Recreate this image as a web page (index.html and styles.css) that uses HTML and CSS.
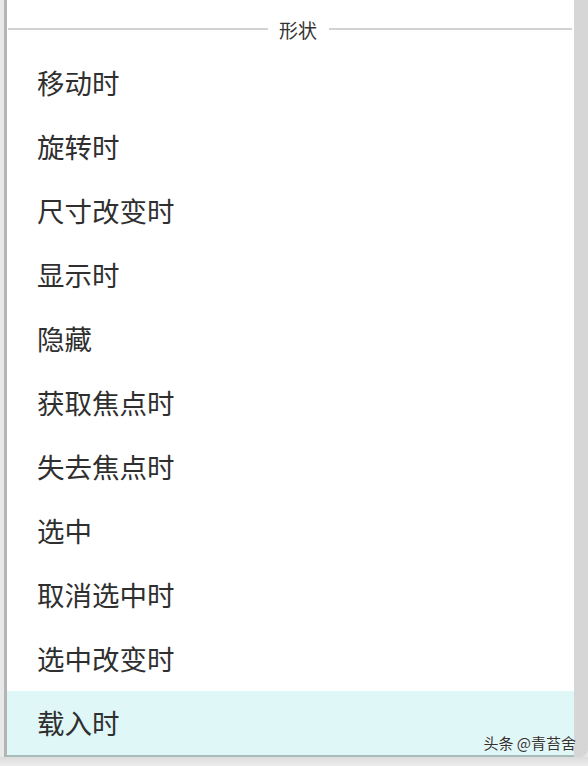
FILE: index.html
```html
<!DOCTYPE html>
<html lang="zh-CN">
<head>
    <meta charset="UTF-8">
    <meta name="viewport" content="width=device-width, initial-scale=1.0">
    <title>形状事件</title>
    <link rel="stylesheet" href="styles.css">
</head>
<body>
    <div class="window">
        <!-- left frame edge -->
        <div class="side"></div>

        <div class="panel">
            <!-- Section title with rules on both sides -->
            <div class="section-title">
                <span class="rule rule-left"></span>
                <span class="label">形状</span>
                <span class="rule rule-right"></span>
            </div>

            <ul class="event-list">
                <li>移动时</li>
                <li>旋转时</li>
                <li>尺寸改变时</li>
                <li>显示时</li>
                <li>隐藏</li>
                <li>获取焦点时</li>
                <li>失去焦点时</li>
                <li>选中</li>
                <li>取消选中时</li>
                <li>选中改变时</li>
                <li class="active">载入时</li>
            </ul>
        </div>

        <!-- scrollbar thumb -->
        <div class="scroll"></div>
    </div>

    <div class="footer"></div>

    <span class="watermark">头条 @青苔舍</span>
</body>
</html>
```

FILE: styles.css
```css
body {
    margin: 0;
    padding: 0;
    width: 588px;
    height: 766px;
    overflow: hidden;
    position: relative;
    background-color: #e6e6e6;
    font-family: "Noto Sans CJK SC", "Noto Sans", sans-serif;
    color: #333;
}

.window {
    display: flex;
    height: 757px;
}

.side {
    width: 4px;
    background-color: #e8e8e8;
    border-right: 3px solid #b4b4b4;
}

.panel {
    flex: 1;
    display: flex;
    flex-direction: column;
    background-color: #fff;
    border-bottom: 2px solid #a9bcbc;
}

/* Section title */
.section-title {
    box-sizing: border-box;
    height: 52px;
    padding: 6px 2px 0 1px;
    display: flex;
    align-items: center;
}

.section-title .rule {
    height: 2px;
    background-color: #d2d2d2;
}

.section-title .rule-left {
    width: 260px;
}

.section-title .rule-right {
    flex: 1;
}

.section-title .label {
    font-size: 19px;
    padding: 0 12px 0 11px;
    color: #333;
}

/* Event list */
.event-list {
    list-style: none;
    margin: 0;
    padding: 0;
    flex: 1;
    display: flex;
    flex-direction: column;
}

.event-list li {
    flex: 1;
    display: flex;
    align-items: center;
    padding: 0 0 3px 30px;
    font-size: 27.5px;
    color: #2f2f2f;
}

.event-list li.active {
    background-color: #dff7f7;
}

.scroll {
    width: 14px;
    background-color: #d6d6d6;
    border-bottom-right-radius: 8px;
}

.footer {
    height: 9px;
    background: linear-gradient(to bottom, #dcdcdc, #ececec);
}

.watermark {
    position: absolute;
    right: 12px;
    bottom: 13px;
    font-size: 15px;
    color: #333;
    text-shadow: 0 0 2px #fff;
}
```
